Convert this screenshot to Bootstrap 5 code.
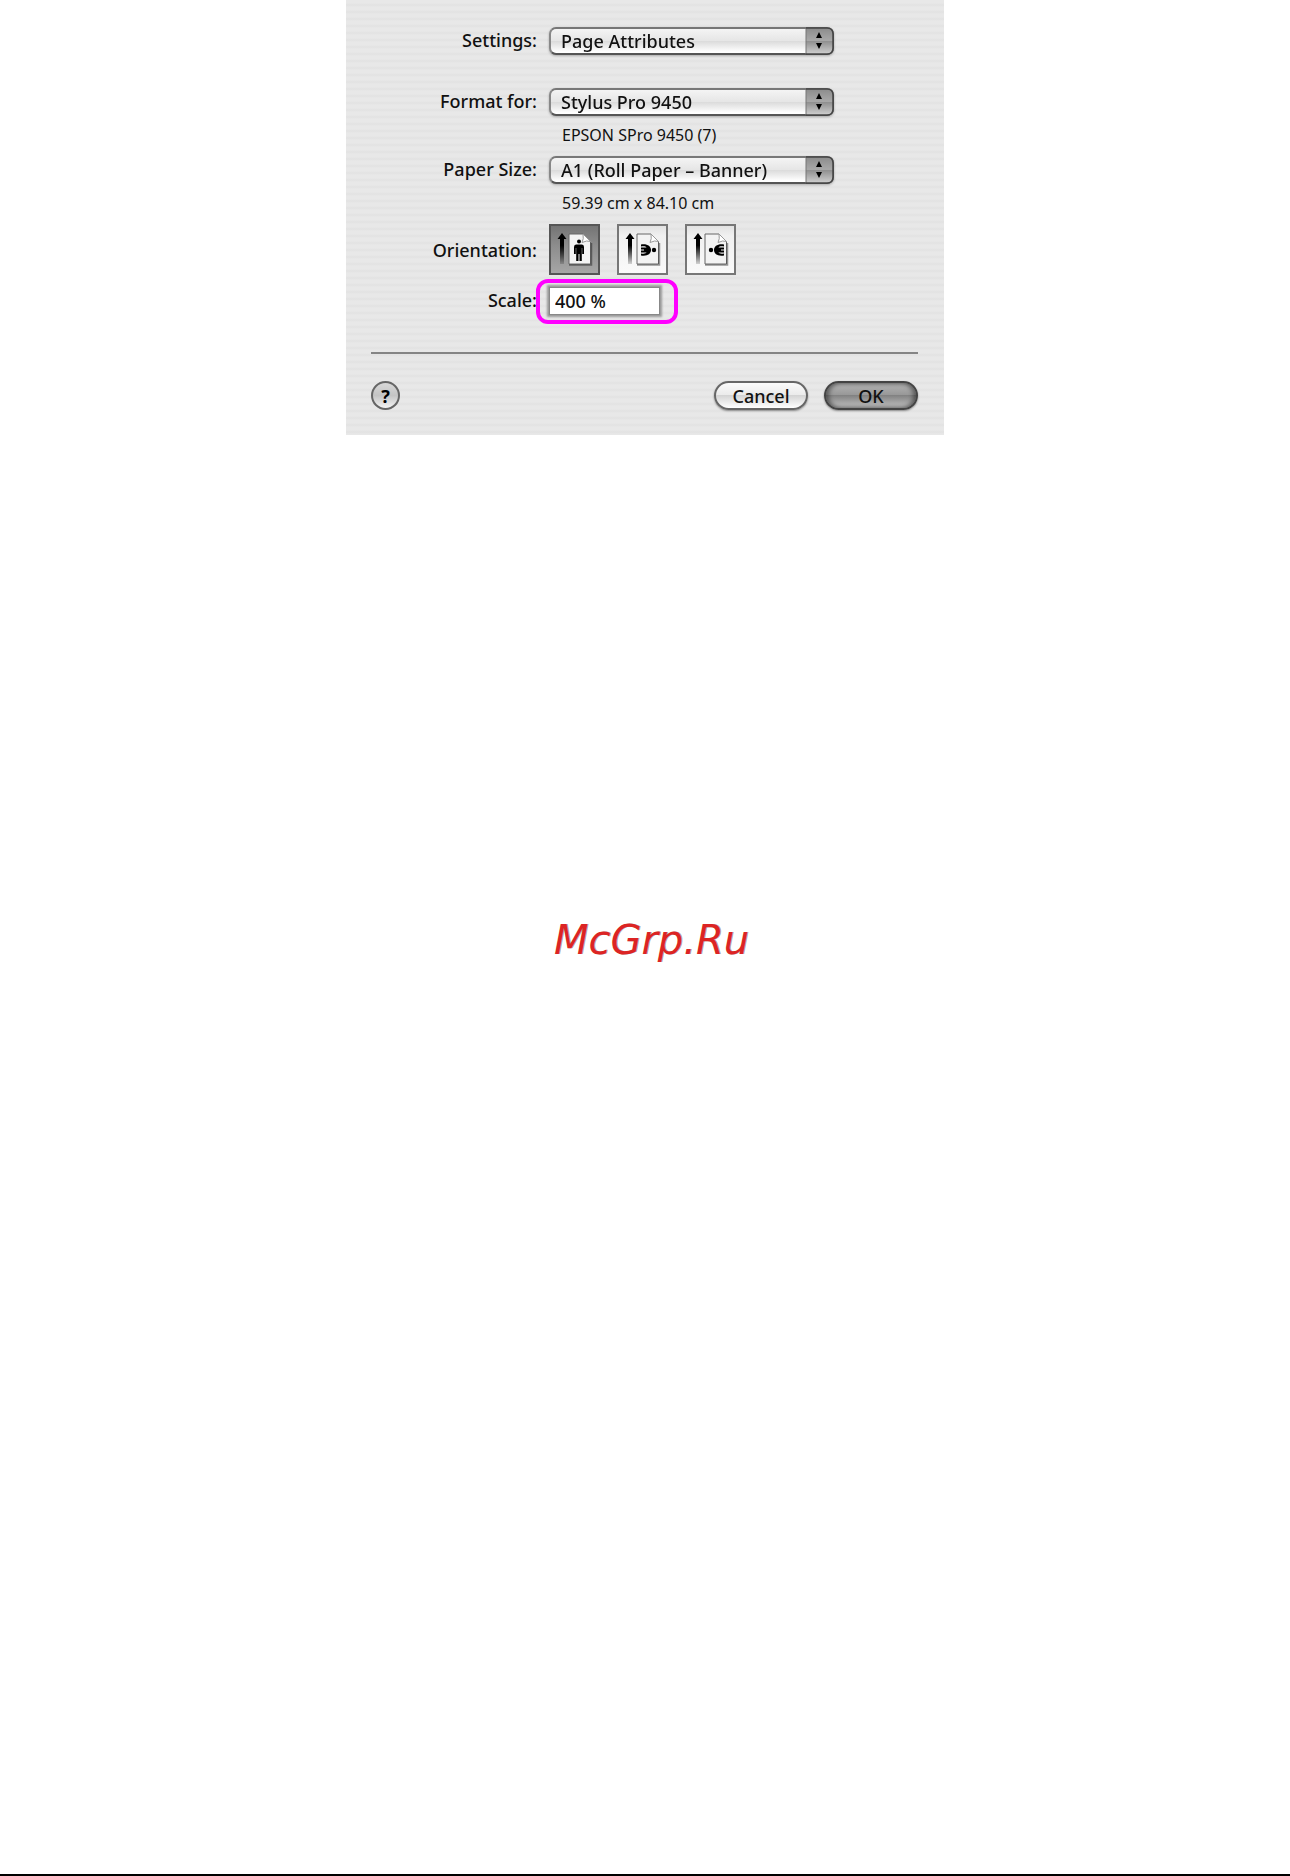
<!DOCTYPE html>
<html lang="en">
<head>
<meta charset="utf-8">
<meta name="viewport" content="width=device-width, initial-scale=1">
<title>Page Setup</title>
<link href="https://cdn.jsdelivr.net/npm/bootstrap@5.3.0/dist/css/bootstrap.min.css" rel="stylesheet">
<style>
  body { background: #fff; color: #111; font-family: "Noto Sans", "Open Sans", sans-serif; font-size: 18px; line-height: 24px; }
  .sheet { border-bottom: 2px solid #000; }
  .dialog { width: 100%; max-width: 598px; padding: 27px 26px 25px 25px;
    background: repeating-linear-gradient(#e8e8e8 0, #e8e8e8 3px, #e2e2e2 5px, #e8e8e8 7px); }
  .field { display: flex; gap: 12px; }
  .field-name { flex: 0 0 166px; text-align: right; font-weight: 500; line-height: 26px; white-space: nowrap; }
  .format-row { margin-top: 33px; }
  .scale-row { margin-top: 12px; }
  .popup { width: 285px; max-width: 100%; filter: drop-shadow(0 1px 1px #0004); }
  .popup select { display: block; appearance: none; width: 100%; height: 28px; padding: 0 36px 0 10px; border: 2px solid; border-color: #777 #555 #555 #888;
    border-radius: 7px; background: linear-gradient(#f4f4f4, #e6e6e6 48%, #dadada 50%, #fff 95%); color: #111; font-weight: 500; line-height: 24px; }
  .popup svg { position: absolute; right: 0; top: 0; pointer-events: none; }
  .hint { padding-left: 191px; font-size: 16px; line-height: 24px; margin: 7px 0 9px; }
  .orient-set { gap: 17px; }
  .orient { display: block; width: 51px; height: 51px; border: 2px solid #777; background: linear-gradient(#e2e2e2, #f0f0f0 20%, #fafafa); }
  .orient svg { display: block; }
  .btn-check:checked + .orient { background: linear-gradient(#747474, #8c8c8c 40%, #a6a6a6); border-color: #555; }
  .scale-box { display: block; width: 111px; height: 28px; padding: 0 0 0 5px; border: 1px solid #888; border-radius: 0; background: #fff; color: #111; font-weight: 500;
    box-shadow: 0 0 2px 2px #999; }
  .marker { position: absolute; left: -13px; top: -8px; width: 142px; height: 45px; border: 4px solid #f0f; border-radius: 12px; pointer-events: none; }
  .divider { height: 2px; margin: 37px 0 27px; background: #858585; }
  .pill { width: 94px; height: 29px; padding: 0; border: 2px solid #666; border-radius: 15px; color: #111; font-weight: 500; line-height: 24px;
    background: linear-gradient(#fafafa, #ebebeb 47%, #d4d4d4 50%, #fff); box-shadow: 0 1px 2px #0006; }
  .pill-main { border-color: #444; background: linear-gradient(#b4b4b4, #989898 47%, #828282 50%, #c4c4c4); box-shadow: inset 3px 0 4px #0006, inset -3px 0 4px #0006, 0 1px 2px #0006; }
  .help { width: 29px; height: 29px; padding: 0; border: 2px solid #666; border-radius: 50%; font-weight: 700; line-height: 24px; color: #000;
    background: linear-gradient(#d8d8d8, #c4c4c4 50%, #f4f4f4); }
  .stamp { margin: 477px 0 0 13px; font: italic 40px/56px "DejaVu Sans", sans-serif; color: #dc2424; text-shadow: 1px 0 0 #4447; }
</style>
</head>
<body>
<main class="sheet min-vh-100 d-flex flex-column align-items-center">
  <form class="dialog">
    <div class="field">
      <label class="field-name" for="settings">Settings:</label>
      <div class="popup position-relative">
        <select id="settings"><option>Page Attributes</option></select>
        <svg width="29" height="28" viewBox="0 0 29 28"><use href="#stepper"/></svg>
      </div>
    </div>
    <div class="field format-row">
      <label class="field-name" for="format">Format for:</label>
      <div class="popup position-relative">
        <select id="format"><option>Stylus Pro 9450</option></select>
        <svg width="29" height="28" viewBox="0 0 29 28">
          <defs>
            <linearGradient id="steel" x1="0" y1="0" x2="0" y2="1"><stop offset="0" stop-color="#8c8c8c"/><stop offset=".48" stop-color="#a8a8a8"/><stop offset=".5" stop-color="#8e8e8e"/><stop offset="1" stop-color="#d0d0d0"/></linearGradient>
            <linearGradient id="fade" x1="0" y1="0" x2="0" y2="1"><stop offset="0" stop-color="#000"/><stop offset=".4" stop-color="#000"/><stop offset="1" stop-color="#000" stop-opacity=".15"/></linearGradient>
            <g id="stepper"><path d="M1 1H22Q28 1 28 7V21Q28 27 22 27H1Z" fill="url(#steel)"/><path d="M1 1V27" stroke="#777"/><path d="M1 1H22Q28 1 28 7V21Q28 27 22 27H1" fill="none" stroke="#444" stroke-width="1.500"/><path d="M11 11 14 5 17 11ZM11 16H17L14 22Z" fill="#000"/></g>
            <g id="arrow"><path d="M11 7 15.500 13H13V38H9V13H6.500Z" fill="url(#fade)"/></g>
            <g id="leaf"><path d="M18 8H32L39.500 15.500V38H18Z" fill="#f3f3f3" stroke="#666"/><path d="M32 8Q33 13 31 16.500Q36 14 39.500 15.500Z" fill="#fff" stroke="#999"/><path d="M18 39H40.500V17" fill="none" stroke="#0006" stroke-width="1.500"/></g>
            <g id="person"><circle cx="0" cy="-9.500" r="2"/><path d="M-3-6.500H3Q5-6.500 5-4V3H3.200V-3H2.800V10H.500V3H-.500V10H-2.800V-3H-3.200V3H-5V-4Q-5-6.500-3-6.500Z"/></g>
            <g id="lying"><circle cx="6" cy="0" r="2.200"/><path d="M-7-5.500C-1-6.500 3-4 3 0C3 4-1 6.500-7 5.500V3.500C-4 4-2 3.500-1.500 2.500H-7V.600H-4V-.600H-7V-2.500H-1.500C-2-3.500-4-4-7-3.500Z"/></g>
          </defs>
          <use href="#stepper"/>
        </svg>
      </div>
    </div>
    <p class="hint">EPSON SPro 9450 (7)</p>
    <div class="field">
      <label class="field-name" for="paper">Paper Size:</label>
      <div class="popup position-relative">
        <select id="paper"><option>A1 (Roll Paper – Banner)</option></select>
        <svg width="29" height="28" viewBox="0 0 29 28"><use href="#stepper"/></svg>
      </div>
    </div>
    <p class="hint">59.39 cm x 84.10 cm</p>
    <div class="field align-items-center" role="radiogroup" aria-labelledby="orientation">
      <span class="field-name" id="orientation">Orientation:</span>
      <div class="orient-set d-flex">
        <div><input class="btn-check" type="radio" name="orient" id="portrait" checked>
        <label class="orient" for="portrait" aria-label="Portrait"><svg width="47" height="47"><use href="#arrow"/><use href="#leaf"/><use href="#person" x="28" y="25"/></svg></label></div>
        <div><input class="btn-check" type="radio" name="orient" id="landscape">
        <label class="orient" for="landscape" aria-label="Landscape"><svg width="47" height="47"><use href="#arrow"/><use href="#leaf"/><use href="#lying" x="29" y="24"/></svg></label></div>
        <div><input class="btn-check" type="radio" name="orient" id="reverse">
        <label class="orient" for="reverse" aria-label="Reverse landscape"><svg width="47" height="47"><use href="#arrow"/><use href="#leaf"/><use href="#lying" transform="translate(30 24) scale(-1 1)"/></svg></label></div>
      </div>
    </div>
    <div class="field scale-row">
      <label class="field-name" for="scale">Scale:</label>
      <div class="position-relative">
        <input class="scale-box" id="scale" type="text" value="400 %">
        <div class="marker"></div>
      </div>
    </div>
    <div class="divider"></div>
    <div class="d-flex align-items-center">
      <button class="help me-auto" type="button" aria-label="Help">?</button>
      <button class="pill" type="button">Cancel</button>
      <button class="pill pill-main ms-3" type="submit">OK</button>
    </div>
  </form>
  <p class="stamp">McGrp.Ru</p>
</main>
<script src="https://cdn.jsdelivr.net/npm/bootstrap@5.3.0/dist/js/bootstrap.bundle.min.js"></script>
</body>
</html>
